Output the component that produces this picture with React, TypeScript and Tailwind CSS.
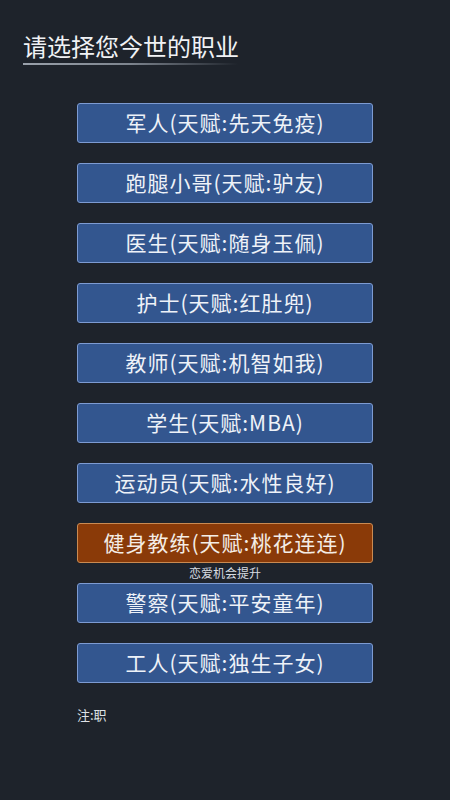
const jobs = [
  "军人(天赋:先天免疫)",
  "跑腿小哥(天赋:驴友)",
  "医生(天赋:随身玉佩)",
  "护士(天赋:红肚兜)",
  "教师(天赋:机智如我)",
  "学生(天赋:MBA)",
  "运动员(天赋:水性良好)",
];

const jobsAfter = ["警察(天赋:平安童年)", "工人(天赋:独生子女)"];

function JobButton({ label, active }: { label: string; active?: boolean }) {
  return (
    <div
      className={
        active
          ? "w-[296px] h-[40px] flex items-center justify-center rounded-[3px] border-[1.5px] border-[#c98a52] bg-[#8a3a08] text-[21px] tracking-[1px] text-[#f4ede6]"
          : "w-[296px] h-[40px] flex items-center justify-center rounded-[3px] border-[1.5px] border-[#7d9bd2] bg-[#33568f] text-[21px] tracking-[1px] text-[#eef2f8]"
      }
    >
      {label}
    </div>
  );
}

export default function App() {
  return (
    <div
      className="w-[450px] h-[800px] bg-[#1e232b] overflow-hidden flex flex-col"
      style={{ fontFamily: '"Noto Sans CJK SC", "Noto Sans", sans-serif' }}
    >
      {/* Title */}
      <div className="pt-[30px] pl-[23px]">
        <div className="text-[24px] leading-[32px] text-[#f0f2f5]">请选择您今世的职业</div>
        <div className="mt-[1px] h-[2px] w-[215px] bg-gradient-to-r from-[#9aa1ab] via-[#7d848e] to-transparent" />
      </div>

      {/* Job list */}
      <div className="mt-[38px] flex flex-col items-center gap-[20px]">
        {jobs.map((j) => (
          <JobButton key={j} label={j} />
        ))}
        <div className="flex flex-col items-center">
          <JobButton label="健身教练(天赋:桃花连连)" active />
          <div className="mt-[1px] text-[12px] leading-[18px] text-[#d8dce2]">恋爱机会提升</div>
        </div>
      </div>
      <div className="mt-[1px] flex flex-col items-center gap-[20px]">
        {jobsAfter.map((j) => (
          <JobButton key={j} label={j} />
        ))}
      </div>

      {/* Note */}
      <div className="mt-[22px] pl-[77px] text-[13px] text-[#dfe2e6]">注:职</div>
    </div>
  );
}
